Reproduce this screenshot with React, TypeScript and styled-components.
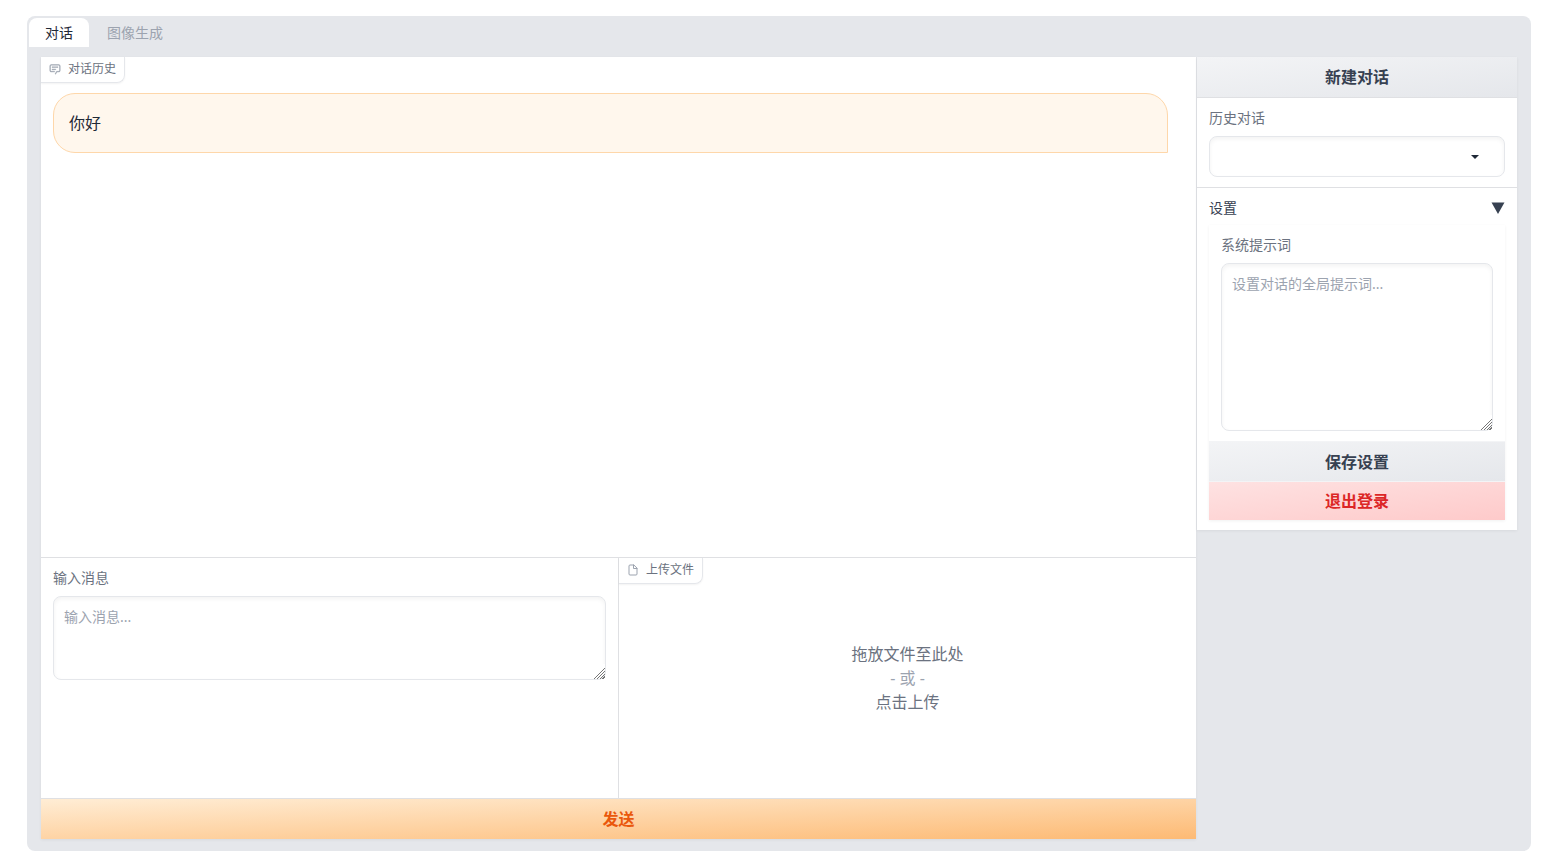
import React from "react";
import styled, { createGlobalStyle } from "styled-components";

const c = {
  shell: "#e5e7eb",
  border: "#e5e7eb",
  line: "#dfe0e3",
  text: "#1f2937",
  strong: "#374151",
  label: "#6b7280",
  muted: "#9ca3af",
};

const GlobalStyle = createGlobalStyle`
  *, *::before, *::after { box-sizing: border-box; }
  body {
    margin: 0;
    background: #fff;
    color: ${c.text};
    font-family: "Noto Sans", "Noto Sans CJK SC", sans-serif;
    font-size: 16px;
    line-height: 24px;
  }
  button, select, textarea { font-family: inherit; margin: 0; }
`;

const Shell = styled.main`
  margin: 16px 27px 14px;
  padding: 2px 2px 0;
  border-radius: 8px;
  background: ${c.shell};
`;

const Tabs = styled.nav`
  display: flex;
  height: 29px;
`;

const Tab = styled.button<{ $active?: boolean }>`
  height: 29px;
  padding: 0 16px;
  border: 0;
  border-radius: 8px 8px 0 0;
  background: ${(p) => (p.$active ? "#fff" : "transparent")};
  color: ${(p) => (p.$active ? c.text : c.muted)};
  font-size: 14px;
  line-height: 20px;
  margin-right: 2px;
`;

const Columns = styled.div`
  display: flex;
  align-items: flex-start;
  gap: 1px;
  padding: 10px 12px 12px;
`;

const Stack = styled.div`
  display: flex;
  flex-direction: column;
  gap: 1px;
  background: ${c.line};
  box-shadow: 0 1px 3px rgba(0, 0, 0, 0.06);
`;

const MainColumn = styled(Stack)`
  flex: 1;
  min-width: 0;
`;

const SideColumn = styled(Stack)`
  flex: 0 0 320px;
`;

const History = styled.section`
  min-height: 500px;
  padding-bottom: 12px;
  background: #fff;
`;

const Tag = styled.div`
  display: inline-flex;
  align-items: center;
  gap: 7px;
  height: 26px;
  padding: 0 8px 1px;
  vertical-align: top;
  border: solid ${c.border};
  border-width: 0 1px 1px 0;
  border-radius: 0 0 8px 0;
  box-shadow: 0 1px 2px rgba(0, 0, 0, 0.05);
  color: ${c.label};
  font-size: 12px;
  line-height: 24px;

  svg {
    width: 12px;
    height: 12px;
    color: ${c.muted};
  }
`;

const Bubble = styled.div`
  margin: 10px 28px 0 12px;
  padding: 16px 15px;
  border: 1px solid #fed7aa;
  border-radius: 22px 22px 0 22px;
  background: #fff7ed;
  line-height: 26px;
`;

const InputRow = styled.div`
  display: grid;
  grid-template-columns: 1fr 1fr;
  gap: 1px;
  min-height: 240px;
`;

const Block = styled.section`
  padding: 10px 12px;
  background: #fff;
`;

const Label = styled.label`
  display: block;
  margin-bottom: 8px;
  color: ${c.label};
  font-size: 14px;
  line-height: 20px;
`;

const TextArea = styled.textarea<{ $height: number }>`
  display: block;
  width: 100%;
  height: ${(p) => p.$height}px;
  padding: 10px;
  resize: vertical;
  border: 1px solid ${c.border};
  border-radius: 8px;
  outline: none;
  background: #fff;
  box-shadow: inset 0 2px 4px rgba(0, 0, 0, 0.05);
  color: ${c.text};
  font-size: 14px;
  line-height: 20px;

  &::placeholder { color: ${c.muted}; }
  &::-webkit-resizer {
    background:
      linear-gradient(135deg, #fff 60%, transparent 60% 94%, #fff 94%),
      repeating-linear-gradient(135deg, transparent 0 1px, #777 1px 2px);
  }
`;

const Upload = styled.section`
  display: flex;
  flex-direction: column;
  align-items: flex-start;
  background: #fff;
`;

const DropZone = styled.button`
  flex: 1;
  align-self: stretch;
  padding: 0 0 26px;
  border: 0;
  background: transparent;
  color: ${c.label};
  font-size: 16px;
  line-height: 24px;
`;

const DropLine = styled.span<{ $muted?: boolean }>`
  display: block;
  color: ${(p) => (p.$muted ? c.muted : "inherit")};
`;

const tones = {
  primary: { from: "#ffedd5", to: "#fdba74", text: "#ea580c" },
  secondary: { from: "#f3f4f6", to: "#e5e7eb", text: c.strong },
  stop: { from: "#fee2e2", to: "#fecaca", text: "#dc2626" },
};

const Action = styled.button<{ $tone: keyof typeof tones }>`
  width: 100%;
  height: 40px;
  padding: 0;
  border: 0;
  background: linear-gradient(
    to bottom right,
    ${(p) => tones[p.$tone].from},
    ${(p) => tones[p.$tone].to}
  );
  color: ${(p) => tones[p.$tone].text};
  font-size: 16px;
  font-weight: 700;
  line-height: 24px;
`;

const SelectBox = styled.div`
  position: relative;

  svg {
    position: absolute;
    top: 11px;
    right: 21px;
    width: 18px;
    height: 18px;
    pointer-events: none;
  }
`;

const Select = styled.select`
  display: block;
  appearance: none;
  width: 100%;
  height: 41px;
  padding: 0 40px 0 10px;
  border: 1px solid ${c.border};
  border-radius: 8px;
  background: #fff;
  box-shadow: inset 0 2px 4px rgba(0, 0, 0, 0.05);
  color: ${c.text};
  font-size: 14px;
`;

const SettingsToggle = styled.button`
  display: flex;
  align-items: center;
  justify-content: space-between;
  width: 100%;
  padding: 0;
  margin-bottom: 7px;
  border: 0;
  background: transparent;
  color: ${c.strong};
  font-size: 14px;
  line-height: 20px;

  svg {
    width: 14px;
    height: 12px;
  }
`;

const SettingsGroup = styled.div`
  display: flex;
  flex-direction: column;
  background: #fff;
  box-shadow: 0 1px 3px rgba(0, 0, 0, 0.06);

  ${Action} {
    height: 40px;
    border-top: 1px solid #f3f4f6;
  }
  ${Action}:last-child {
    height: 39px;
  }
`;

const ChatIcon = () => (
  <svg
    viewBox="0 0 32 32"
    fill="currentColor"
    stroke="currentColor"
    strokeWidth="1"
    aria-hidden="true"
  >
    <path d="M17.74 30L16 29l4-7h6a2 2 0 0 0 2-2V8a2 2 0 0 0-2-2H6a2 2 0 0 0-2 2v12a2 2 0 0 0 2 2h9v2H6a4 4 0 0 1-4-4V8a4 4 0 0 1 4-4h20a4 4 0 0 1 4 4v12a4 4 0 0 1-4 4h-4.84z" />
    <path d="M8 10h16v2H8zm0 6h10v2H8z" />
  </svg>
);

const FileIcon = () => (
  <svg
    viewBox="0 0 24 24"
    fill="none"
    stroke="currentColor"
    strokeWidth="2"
    strokeLinecap="round"
    strokeLinejoin="round"
    aria-hidden="true"
  >
    <path d="M13 2H6a2 2 0 0 0-2 2v16a2 2 0 0 0 2 2h12a2 2 0 0 0 2-2V9z" />
    <path d="M13 2v7h7" />
  </svg>
);

export default function App() {
  return (
    <>
      <GlobalStyle />
      <Shell>
        <Tabs>
          <Tab $active>对话</Tab>
          <Tab>图像生成</Tab>
        </Tabs>
        <Columns>
          <MainColumn>
            <History>
              <Tag>
                <ChatIcon />
                对话历史
              </Tag>
              <Bubble>你好</Bubble>
            </History>
            <InputRow>
              <Block>
                <Label htmlFor="message">输入消息</Label>
                <TextArea id="message" $height={84} placeholder="输入消息..." />
              </Block>
              <Upload>
                <Tag>
                  <FileIcon />
                  上传文件
                </Tag>
                <DropZone>
                  <DropLine>拖放文件至此处</DropLine>
                  <DropLine $muted>- 或 -</DropLine>
                  <DropLine>点击上传</DropLine>
                </DropZone>
              </Upload>
            </InputRow>
            <Action $tone="primary">发送</Action>
          </MainColumn>
          <SideColumn>
            <Action $tone="secondary">新建对话</Action>
            <Block>
              <Label htmlFor="sessions">历史对话</Label>
              <SelectBox>
                <Select id="sessions" defaultValue="">
                  <option value="" />
                </Select>
                <svg viewBox="0 0 18 18" fill={c.text} aria-hidden="true">
                  <path d="M5 8l4 4 4-4z" />
                </svg>
              </SelectBox>
            </Block>
            <Block>
              <SettingsToggle aria-expanded="true">
                设置
                <svg viewBox="0 0 14 12" fill={c.strong} aria-hidden="true">
                  <path d="M0.5 0.5h13L7 12z" />
                </svg>
              </SettingsToggle>
              <SettingsGroup>
                <Block>
                  <Label htmlFor="prompt">系统提示词</Label>
                  <TextArea
                    id="prompt"
                    $height={168}
                    placeholder="设置对话的全局提示词..."
                  />
                </Block>
                <Action $tone="secondary">保存设置</Action>
                <Action $tone="stop">退出登录</Action>
              </SettingsGroup>
            </Block>
          </SideColumn>
        </Columns>
      </Shell>
    </>
  );
}
